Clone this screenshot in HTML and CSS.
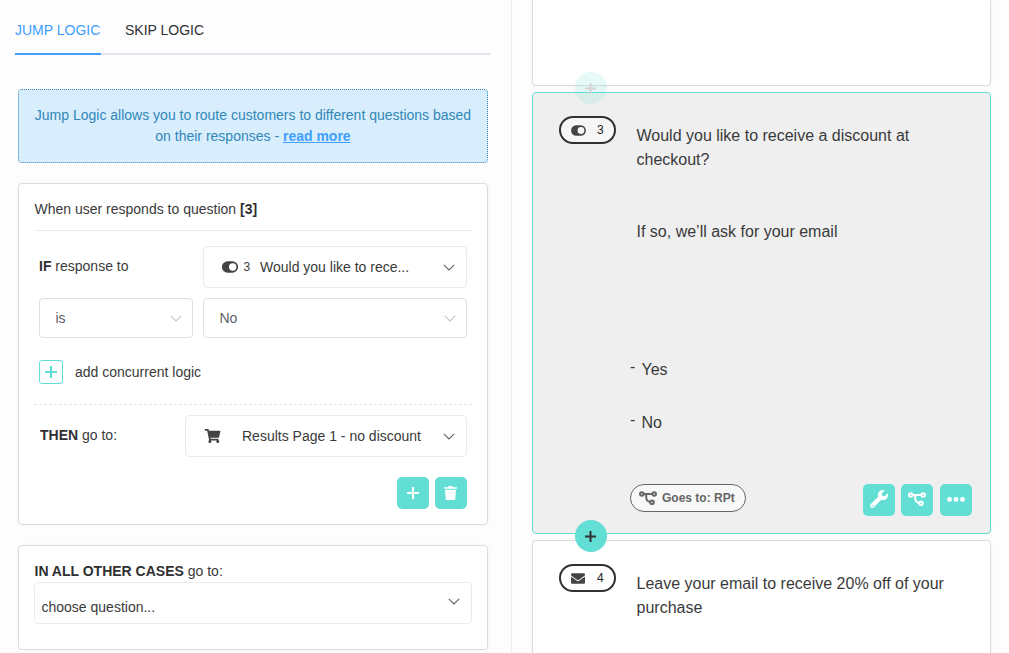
FILE: index.html
```html
<!DOCTYPE html>
<html lang="en">
<head>
<meta charset="utf-8">
<title>Jump Logic</title>
<link rel="stylesheet" href="styles.css">
</head>
<body>
<svg class="defs" width="0" height="0">
  <symbol id="toggle" viewBox="0 0 16 12"><path fill-rule="evenodd" d="M5.600.300h4.800a5.600 5.600 0 0 1 0 11.400H5.600a5.600 5.600 0 0 1 0-11.400zM10.700 2.300a3.700 3.700 0 1 0 0 7.400 3.700 3.700 0 0 0 0-7.400z"/></symbol>
  <symbol id="cart" viewBox="0 0 576 512"><path d="M528.12 301.319l47.273-208C578.806 78.301 567.391 64 551.99 64H159.208l-9.166-44.81C147.758 8.021 137.93 0 126.529 0H24C10.745 0 0 10.745 0 24v16c0 13.255 10.745 24 24 24h69.883l70.248 343.435C147.325 417.1 136 435.222 136 456c0 30.928 25.072 56 56 56s56-25.072 56-56c0-15.674-6.447-29.835-16.824-40h209.647C430.447 426.165 424 440.326 424 456c0 30.928 25.072 56 56 56s56-25.072 56-56c0-22.172-12.888-41.332-31.579-50.405l5.517-24.276c3.413-15.018-8.002-29.319-23.403-29.319H218.117l-6.545-32h293.145c11.206 0 20.920-7.754 23.403-18.681z"/></symbol>
  <symbol id="wrench" viewBox="0 0 512 512"><path d="M507.73 109.1c-2.24-9.03-13.54-12.09-20.12-5.51l-74.36 74.36-67.88-11.31-11.31-67.88 74.36-74.36c6.62-6.62 3.43-17.9-5.66-20.16-47.38-11.74-99.55.91-136.58 37.93-39.64 39.64-50.55 97.1-34.05 147.2L18.74 402.76c-24.99 24.99-24.99 65.51 0 90.5 24.99 24.99 65.51 24.99 90.5 0l213.21-213.21c50.12 16.71 107.47 5.68 147.37-34.22 37.07-37.07 49.7-89.32 37.91-136.73zM64 472c-13.25 0-24-10.75-24-24 0-13.26 10.75-24 24-24s24 10.740 24 24c0 13.250-10.750 24-24 24z"/></symbol>
  <symbol id="envelope" viewBox="0 64 512 384"><path d="M502.3 190.8c3.9-3.1 9.7-.2 9.7 4.7V400c0 26.5-21.5 48-48 48H48c-26.5 0-48-21.5-48-48V195.6c0-5 5.7-7.8 9.7-4.7 22.4 17.4 52.1 39.5 154.1 113.6 21.1 15.4 56.7 47.8 92.2 47.6 35.7.3 72-32.8 92.3-47.6 102-74.1 131.6-96.3 154-113.7zM256 320c23.2.4 56.6-29.2 73.4-41.4 132.7-96.3 142.8-104.7 173.4-128.7 5.8-4.5 9.2-11.5 9.2-18.9v-19c0-26.5-21.5-48-48-48H48c-26.5 0-48 21.5-48 48v19c0 7.4 3.4 14.3 9.2 18.9 30.6 23.9 40.7 32.4 173.4 128.7 16.8 12.2 50.2 41.8 73.4 41.4z"/></symbol>
  <symbol id="trash" viewBox="0 0 13 14"><path d="M0 1.200h4L4.700 0h3.600L9 1.200h4v1.600H0zM1 3.700h11l-.7 9.300q-.1 1-1.100 1H2.800q-1 0-1.100-1z"/></symbol>
  <symbol id="plus" viewBox="0 0 12 12"><path d="M4.900 0h2.200v4.900H12v2.200H7.100V12H4.900V7.100H0V4.900h4.900z"/></symbol>
  <symbol id="branch" viewBox="0 0 18 14"><g fill="none" stroke="currentColor" stroke-width="2"><circle cx="2.800" cy="3" r="1.800"/><circle cx="15.200" cy="3" r="1.800"/><circle cx="13" cy="11.200" r="1.800"/><path d="M4.600 3h8.800M7.200 3v3.500q.4 3.800 4 4.600"/></g></symbol>
  <symbol id="chevron" viewBox="0 0 12 7"><path d="M.8.800L6 6 11.200.800" fill="none" stroke="currentColor" stroke-width="1.100"/></symbol>
</svg>
<div class="app">
  <section class="logic">
    <nav class="tabs"><span class="tab active">JUMP LOGIC</span><span class="tab">SKIP LOGIC</span></nav>
    <p class="info">Jump Logic allows you to route customers to different questions based<br>on their responses - <a>read more</a></p>
    <div class="card rule">
      <h3 class="rule-title">When user responds to question <b>[3]</b></h3>
      <div class="row first">
        <span class="label"><b>IF</b> response to</span>
        <div class="select question"><svg class="i-toggle"><use href="#toggle"/></svg><span class="num">3</span><span class="value">Would you like to rece...</span><svg class="chev"><use href="#chevron"/></svg></div>
      </div>
      <div class="row second">
        <div class="select plain is"><span>is</span><svg class="chev"><use href="#chevron"/></svg></div>
        <div class="select plain answer"><span>No</span><svg class="chev"><use href="#chevron"/></svg></div>
      </div>
      <div class="row add"><span class="add-box"><svg class="i-plus"><use href="#plus"/></svg></span><span class="add-label">add concurrent logic</span></div>
      <div class="row then">
        <span class="label"><b>THEN</b> go to:</span>
        <div class="select target"><svg class="i-cart"><use href="#cart"/></svg><span class="value">Results Page 1 - no discount</span><svg class="chev"><use href="#chevron"/></svg></div>
      </div>
      <div class="actions"><span class="btn"><svg class="i-plus"><use href="#plus"/></svg></span><span class="btn trash"><svg class="i-trash"><use href="#trash"/></svg></span></div>
    </div>
    <div class="card other">
      <div class="other-title"><b>IN ALL OTHER CASES</b> go to:</div>
      <div class="select choose"><span>choose question...</span><svg class="chev"><use href="#chevron"/></svg></div>
    </div>
  </section>
  <main class="survey">
    <article class="q previous"></article>
    <article class="q current">
      <span class="insert faded"><svg class="i-plus"><use href="#plus"/></svg></span>
      <span class="badge"><svg class="i-toggle"><use href="#toggle"/></svg><span>3</span></span>
      <div class="content">
        <p class="text">Would you like to receive a discount at checkout?</p>
        <p class="text sub">If so, we’ll ask for your email</p>
        <div class="answers">
          <div class="option"><i>-</i><span>Yes</span></div>
          <div class="option"><i>-</i><span>No</span></div>
        </div>
        <div class="footer">
          <span class="goes"><svg class="i-branch"><use href="#branch"/></svg><span>Goes to: RPt</span></span>
          <div class="tools">
            <span class="btn"><svg class="i-wrench"><use href="#wrench"/></svg></span>
            <span class="btn"><svg class="i-branch"><use href="#branch"/></svg></span>
            <span class="btn more"><svg class="i-dots" viewBox="0 0 18 5"><circle cx="2.500" cy="2.500" r="2.400"/><circle cx="9" cy="2.500" r="2.400"/><circle cx="15.500" cy="2.500" r="2.400"/></svg></span>
          </div>
        </div>
      </div>
    </article>
    <article class="q next">
      <span class="insert"><svg class="i-plus"><use href="#plus"/></svg></span>
      <span class="badge"><svg class="i-envelope"><use href="#envelope"/></svg><span>4</span></span>
      <div class="content"><p class="text">Leave your email to receive 20% off of your purchase</p></div>
    </article>
  </main>
</div>
</body>
</html>
```
FILE: styles.css
```css
* { box-sizing: border-box; }
body { margin: 0; background: #fdfdfd; color: #3a3a3a; font: 14px/21px "Liberation Sans", Arial, sans-serif; }
svg { display: block; flex: none; fill: currentColor; }
.defs { position: absolute; }
p, h3 { margin: 0; font-weight: normal; font-size: inherit; }
b { color: #303030; }
.app { display: flex; width: 1009px; height: 653px; overflow: hidden; }

/* logic editor */
.logic { flex: none; width: 512px; padding: 0 23px 0 18px; border-right: 1px solid #ebebeb; }
.tabs { display: flex; gap: 24px; width: 476px; height: 55px; margin-left: -3px; border-bottom: 2px solid #e4e7ed; }
.tab { height: 55px; padding-top: 20px; color: #303133; white-space: nowrap; }
.tab.active { width: 86px; color: #409eff; border-bottom: 2px solid #409eff; }
.info { width: 470px; height: 74px; margin-top: 34px; padding-top: 15px; border: 1px dotted #3187b8; border-radius: 4px; background: #d8eefd; color: #3187b8; text-align: center; }
.info a { color: #409eff; font-weight: bold; text-decoration: underline; }
.card { width: 470px; margin-top: 20px; padding: 0 15px; border: 1px solid #dcdcdc; border-radius: 4px; background: #fff; box-shadow: 0 0 4px rgba(0,0,0,.04); }
.rule { height: 342px; }
.rule-title { height: 47px; padding: 15px 0 0 .5px; border-bottom: 1px solid #ebebeb; }
.row { display: flex; align-items: center; padding: 0 5px; }
.label { flex: 1; }
.first { margin-top: 15px; }
.first .label { padding-bottom: 2px; }
.second { gap: 10px; margin-top: 10px; }
.select { display: flex; align-items: center; height: 42px; border: 1px solid #ebebeb; border-radius: 4px; background: #fff; }
.chev { width: 12px; height: 7px; margin: 1px 0 0 auto; color: #606266; }
.question { width: 264px; padding: 0 11.5px 0 18px; }
.num { width: 16.500px; margin-left: 5.500px; font-size: 12px; }
.i-toggle { width: 16px; height: 12px; color: #444; }
.plain { height: 40px; padding: 0 10.5px 0 15.5px; border-color: #dcdfe6; color: #606266; }
.plain .chev { color: #c0c4cc; }
.is { width: 154px; }
.answer { width: 264px; }
.add { height: 66px; padding-top: 2px; }
.add-box { display: flex; align-items: center; justify-content: center; width: 24px; height: 24px; margin-right: 12px; border: 1px solid #62ded4; border-radius: 3px; color: #62ded4; }
.i-plus { width: 12px; height: 12px; }
.then { height: 53px; padding: 10px 5px 0 6px; border-top: 1px dashed #e6e6e6; }
.then .label { padding-bottom: 2px; }
.target { width: 282px; padding: 0 11.5px 0 18px; }
.i-cart { width: 17px; height: 14px; margin-right: 21px; color: #444; }
.actions { display: flex; justify-content: flex-end; gap: 6px; margin-top: 20px; padding-right: 5px; }
.btn { display: flex; align-items: center; justify-content: center; width: 32px; height: 32px; border-radius: 5px; background: #62ded4; color: #fff; }
.trash { padding-right: 1px; }
.i-trash { width: 13px; height: 14px; }
.other { height: 105px; }
.other-title { height: 36px; padding: 15px 0 0 .5px; }
.choose { padding: 8px 11.5px 0 6.5px; }
.choose .chev { margin-top: -12px; }

/* survey preview */
.survey { width: 497px; padding-left: 20px; }
.q { position: relative; display: flex; width: 459px; padding: 23px 18px 17px 26px; border: 1px solid #dcdcdc; border-radius: 4px; background: #fff; box-shadow: 0 0 4px rgba(0,0,0,.04); }
.previous { height: 86px; padding: 0; border-top: 0; border-radius: 0 0 4px 4px; }
.current { height: 442px; margin-top: 6px; border-color: #62ded4; background: #efefef; }
.next { height: 160px; margin-top: 6px; }
.insert { position: absolute; top: -21px; left: 42px; display: flex; align-items: center; justify-content: center; width: 32px; height: 32px; padding-right: 1px; border-radius: 50%; background: #62ded4; color: #303030; }
.insert .i-plus { width: 11px; height: 11px; }
.insert.faded { background: rgba(98,222,212,.16); color: #d8d3d3; }
.badge { display: flex; align-items: center; flex: none; width: 57px; height: 28px; padding-left: 10px; border: 2px solid #303030; border-radius: 14px; background: #fff; font-size: 12px; color: #222; }
.badge svg { width: 15px; height: 11px; margin-right: 11px; color: #444; }
.badge .i-envelope { width: 14px; margin-right: 12px; }
.current .badge { background: #f6f6f6; }
.content { display: flex; flex: 1; flex-direction: column; padding: 8px 0 0 14px; font-size: 16px; line-height: 24px; }
.text { width: 315px; padding-left: 6.5px; }
.sub { margin-top: 48px; }
.answers { margin-top: 99px; }
.option { display: flex; height: 53px; padding-top: 14px; border-top: 1px dotted #eaeaea; }
.option i { width: 11.5px; margin-top: -3px; font-style: normal; }
.footer { display: flex; align-items: flex-start; justify-content: space-between; margin-top: 35px; }
.goes { display: flex; align-items: center; gap: 5px; width: 116px; height: 28px; padding-left: 8px; border: 1px solid #666; border-radius: 14px; background: #f8f8f8; color: #666; font-size: 12px; font-weight: bold; white-space: nowrap; }
.i-branch { width: 18px; height: 14px; }
.tools { display: flex; gap: 6px; }
.tools .btn { padding-bottom: 2px; }
.more { margin-left: 1px; }
.i-wrench { width: 18px; height: 18px; }
.i-dots { width: 18px; height: 5px; }
```
